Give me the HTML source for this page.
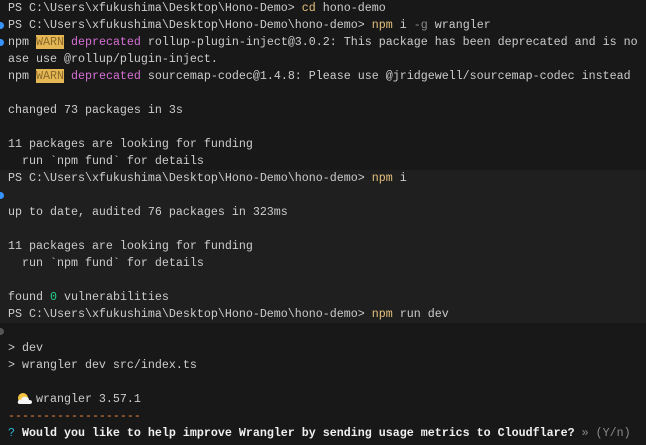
<!DOCTYPE html>
<html><head><meta charset="utf-8"><style>
html,body{margin:0;padding:0;width:646px;height:445px;overflow:hidden;background:#181818}
.band{position:absolute;left:0;top:170px;width:646px;height:153px;background:#1f1f1f}
pre{position:absolute;left:8px;top:0;margin:0;font-family:"Liberation Mono",monospace;font-size:11.67px;line-height:17px;color:#cccccc;white-space:pre}
.y{color:#e5c07b}.g{color:#8b8b8b}.m{color:#d670d6}
.w{background:#e5b654;color:#8a6a2a}
.t{color:#23d18b}.o{color:#f0883e}.c{color:#29b8db}.b{color:#f0f0f0;font-weight:bold}
.dot{position:absolute;left:-3px;width:7px;height:7px;border-radius:50%;background:#3794ff}
</style></head><body>
<div class="band"></div>
<div class="dot" style="top:22px"></div>
<div class="dot" style="top:39px"></div>
<div class="dot" style="top:192px"></div>
<div class="dot" style="top:328px;background:#555"></div>
<svg style="position:absolute;left:17px;top:392px" width="16" height="13" viewBox="0 0 16 13">
<circle cx="6" cy="6" r="5" fill="#f5c542"/>
<path d="M3 12 Q0 12 1 9 Q2 7 4 8 Q5 4 9 5 Q12 5 12 8 Q15 8 15 10 Q15 12 13 12 Z" fill="#f4f4f4"/>
</svg>
<pre>PS C:\Users\xfukushima\Desktop\Hono-Demo&gt; <span class="y">cd</span> hono-demo
PS C:\Users\xfukushima\Desktop\Hono-Demo\hono-demo&gt; <span class="y">npm</span> i <span class="g">-g</span> wrangler
npm <span class="w">WARN</span> <span class="m">deprecated</span> rollup-plugin-inject@3.0.2: This package has been deprecated and is no
ase use @rollup/plugin-inject.
npm <span class="w">WARN</span> <span class="m">deprecated</span> sourcemap-codec@1.4.8: Please use @jridgewell/sourcemap-codec instead

changed 73 packages in 3s

11 packages are looking for funding
  run `npm fund` for details
PS C:\Users\xfukushima\Desktop\Hono-Demo\hono-demo&gt; <span class="y">npm</span> i

up to date, audited 76 packages in 323ms

11 packages are looking for funding
  run `npm fund` for details

found <span class="t">0</span> vulnerabilities
PS C:\Users\xfukushima\Desktop\Hono-Demo\hono-demo&gt; <span class="y">npm</span> run dev

&gt; dev
&gt; wrangler dev src/index.ts

    wrangler 3.57.1
<span class="o">-------------------</span>
<span class="c">?</span> <span class="b">Would you like to help improve Wrangler by sending usage metrics to Cloudflare?</span> <span class="g">» (Y/n)</span></pre>
</body></html>
